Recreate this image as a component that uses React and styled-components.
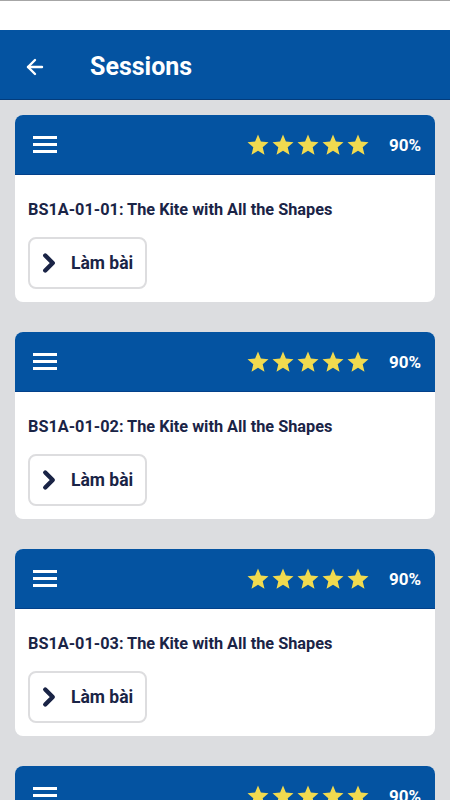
import React from 'react'
import styled, { createGlobalStyle } from 'styled-components'
import { ArrowLeft, ChevronRight } from 'lucide-react'

const GlobalStyle = createGlobalStyle`
    html, body {
        margin : 0;
        padding : 0;
        background-color : #dcdde0;
        font-family : Roboto, "Liberation Sans", sans-serif;
    }
    * {
        box-sizing : border-box;
    }
`

const sessions = [
    { code : 'BS1A-01-01', title : 'The Kite with All the Shapes', stars : 5, score : 90 },
    { code : 'BS1A-01-02', title : 'The Kite with All the Shapes', stars : 5, score : 90 },
    { code : 'BS1A-01-03', title : 'The Kite with All the Shapes', stars : 5, score : 90 },
    { code : 'BS1A-01-04', title : 'The Kite with All the Shapes', stars : 5, score : 90 },
]

const Star = () => (
    <svg width="24" height="24" viewBox="0 0 24 24">
        <polygon
            points="12,1.5 14.9,8.6 22.5,9.2 16.7,14.2 18.5,21.7 12,17.7 5.5,21.7 7.3,14.2 1.5,9.2 9.1,8.6"
            fill="#f1da4f"
        />
    </svg>
)

const SessionCard = ({ item }) => {
    return (
        <Card>
            <CardHeader>
                <MenuIcon>
                    <span />
                    <span />
                    <span />
                </MenuIcon>
                <Rating>
                    <Stars>
                        {Array.from({ length : item.stars }).map((_, i) => <Star key={i} />)}
                    </Stars>
                    <Score>{item.score}%</Score>
                </Rating>
            </CardHeader>
            <CardBody>
                <SessionTitle>{item.code}: {item.title}</SessionTitle>
                <DoButton>
                    <ChevronRight size={30} strokeWidth={3.5} color="#1a2446" />
                    <span>Làm bài</span>
                </DoButton>
            </CardBody>
        </Card>
    )
}

const App = () => {
    return (
        <>
            <GlobalStyle />
            <Page>
                <StatusBar />
                <TopBar>
                    <BackBtn>
                        <ArrowLeft size={24} strokeWidth={2.4} color="#ffffff" />
                    </BackBtn>
                    <TopTitle>Sessions</TopTitle>
                </TopBar>
                <List>
                    {sessions.map((s) => <SessionCard key={s.code} item={s} />)}
                </List>
            </Page>
        </>
    )
}

const Page = styled.div`
    width : 100%;
    min-height : 100vh;
    display : flex;
    flex-direction : column;
`

const StatusBar = styled.div`
    height : 30px;
    background-color : #ffffff;
    border-top : 1px solid #a6a6a6;
`

const TopBar = styled.div`
    height : 70px;
    background-color : #0453a1;
    border-bottom : 1px solid #033c7c;
    display : flex;
    align-items : center;
    padding : 4px 0 0 23px;
`

const BackBtn = styled.div`
    width : 24px;
    height : 24px;
    display : flex;
    align-items : center;
    justify-content : center;
    margin-right : 43px;
`

const TopTitle = styled.div`
    font-size : 25px;
    font-weight : 700;
    color : #ffffff;
`

const List = styled.div`
    display : flex;
    flex-direction : column;
    gap : 30px;
    padding : 15px 15px 30px;
`

const Card = styled.div`
    background-color : #ffffff;
    border-radius : 8px;
    overflow : hidden;
`

const CardHeader = styled.div`
    height : 60px;
    background-color : #0453a1;
    border-bottom : 1px solid #03418a;
    display : flex;
    align-items : center;
    justify-content : space-between;
    padding : 0 14px 0 18px;
`

const MenuIcon = styled.div`
    width : 24px;
    display : flex;
    flex-direction : column;
    gap : 4px;

    span {
        display : block;
        height : 3px;
        background-color : #ffffff;
    }
`

const Rating = styled.div`
    display : flex;
    align-items : center;
    gap : 18px;
`

const Stars = styled.div`
    display : flex;

    svg {
        display : block;
        margin-right : 1px;
    }
`

const Score = styled.div`
    font-size : 17px;
    font-weight : 700;
    color : #ffffff;
`

const CardBody = styled.div`
    padding : 26px 13px 13px;
    display : flex;
    flex-direction : column;
    align-items : flex-start;
`

const SessionTitle = styled.div`
    font-size : 16.3px;
    line-height : 18px;
    font-weight : 700;
    color : #1a2446;
    margin-bottom : 18px;
`

const DoButton = styled.div`
    width : 119px;
    height : 52px;
    border : 2px solid #dddddf;
    border-radius : 8px;
    display : flex;
    align-items : center;
    padding-left : 4px;
    gap : 7px;
    font-size : 17.5px;
    font-weight : 700;
    color : #1a2446;
`

export default App
